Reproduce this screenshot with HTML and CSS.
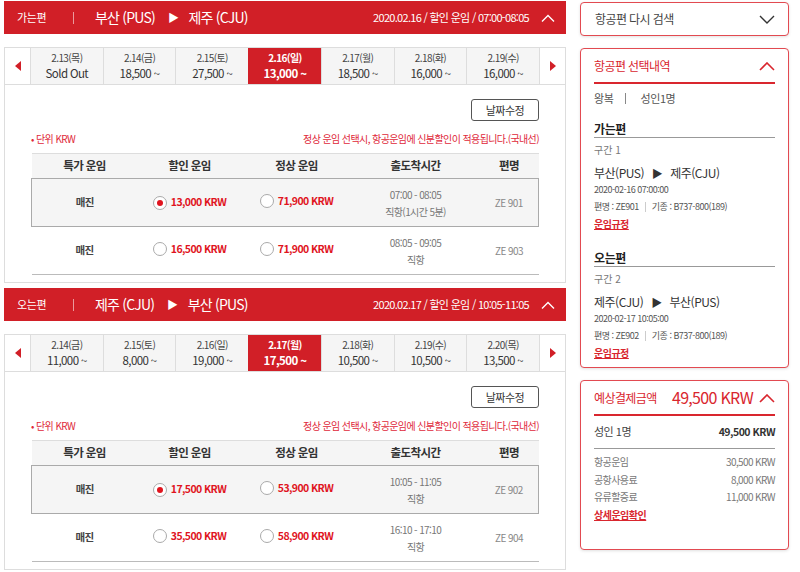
FILE: index.html
```html
<!DOCTYPE html>
<html lang="ko">
<head>
<meta charset="utf-8">
<title>항공편 선택</title>
<link rel="stylesheet" href="styles.css">
</head>
<body>
<div class="page">
  <div class="main">
    <section class="sec">
      <div class="sec-head">
        <span class="dir">가는편</span>
        <span class="vsep"></span>
        <span class="route">부산 (PUS)</span>
        <span class="arrow">▶</span>
        <span class="route">제주 (CJU)</span>
        <span class="info">2020.02.16 / 할인 운임 / 07:00-08:05</span>
        <svg class="chev" width="14" height="8" viewBox="0 0 14 8"><path d="M1 7.5 L7 1.5 L13 7.5" fill="none" stroke="#fff" stroke-width="1.4"/></svg>
      </div>
      <div class="sec-body">
        <div class="dates">
          <div class="nav"><svg width="6" height="10" viewBox="0 0 6 10"><path d="M6 0 L0 5 L6 10Z" fill="#d11f27"/></svg></div>
          <div class="tab"><span class="d">2.13(목)</span><span class="p">Sold Out</span></div>
          <div class="tab"><span class="d">2.14(금)</span><span class="p">18,500 ~</span></div>
          <div class="tab"><span class="d">2.15(토)</span><span class="p">27,500 ~</span></div>
          <div class="tab on"><span class="d">2.16(일)</span><span class="p">13,000 ~</span></div>
          <div class="tab"><span class="d">2.17(월)</span><span class="p">18,500 ~</span></div>
          <div class="tab"><span class="d">2.18(화)</span><span class="p">16,000 ~</span></div>
          <div class="tab"><span class="d">2.19(수)</span><span class="p">16,000 ~</span></div>
          <div class="nav"><svg width="6" height="10" viewBox="0 0 6 10"><path d="M0 0 L6 5 L0 10Z" fill="#d11f27"/></svg></div>
        </div>
        <div class="inner">
          <div class="btn-row"><button class="btn">날짜수정</button></div>
          <div class="notice"><span>• 단위 KRW</span><span>정상 운임 선택시, 항공운임에 신분할인이 적용됩니다.(국내선)</span></div>
          <table class="fares">
            <thead>
              <tr><th>특가 운임</th><th>할인 운임</th><th>정상 운임</th><th>출도착시간</th><th>편명</th></tr>
            </thead>
            <tbody>
              <tr class="sel">
                <td class="sold">매진</td>
                <td><span class="fare"><span class="radio on"></span>13,000 KRW</span></td>
                <td><span class="fare"><span class="radio"></span>71,900 KRW</span></td>
                <td class="time">07:00 - 08:05<br>직항(1시간 5분)</td>
                <td class="fno">ZE 901</td>
              </tr>
              <tr>
                <td class="sold">매진</td>
                <td><span class="fare"><span class="radio"></span>16,500 KRW</span></td>
                <td><span class="fare"><span class="radio"></span>71,900 KRW</span></td>
                <td class="time">08:05 - 09:05<br>직항</td>
                <td class="fno">ZE 903</td>
              </tr>
            </tbody>
          </table>
        </div>
      </div>
    </section>

    <section class="sec sec2">
      <div class="sec-head">
        <span class="dir">오는편</span>
        <span class="vsep"></span>
        <span class="route">제주 (CJU)</span>
        <span class="arrow">▶</span>
        <span class="route">부산 (PUS)</span>
        <span class="info">2020.02.17 / 할인 운임 / 10:05-11:05</span>
        <svg class="chev" width="14" height="8" viewBox="0 0 14 8"><path d="M1 7.5 L7 1.5 L13 7.5" fill="none" stroke="#fff" stroke-width="1.4"/></svg>
      </div>
      <div class="sec-body">
        <div class="dates">
          <div class="nav"><svg width="6" height="10" viewBox="0 0 6 10"><path d="M6 0 L0 5 L6 10Z" fill="#d11f27"/></svg></div>
          <div class="tab"><span class="d">2.14(금)</span><span class="p">11,000 ~</span></div>
          <div class="tab"><span class="d">2.15(토)</span><span class="p">8,000 ~</span></div>
          <div class="tab"><span class="d">2.16(일)</span><span class="p">19,000 ~</span></div>
          <div class="tab on"><span class="d">2.17(월)</span><span class="p">17,500 ~</span></div>
          <div class="tab"><span class="d">2.18(화)</span><span class="p">10,500 ~</span></div>
          <div class="tab"><span class="d">2.19(수)</span><span class="p">10,500 ~</span></div>
          <div class="tab"><span class="d">2.20(목)</span><span class="p">13,500 ~</span></div>
          <div class="nav"><svg width="6" height="10" viewBox="0 0 6 10"><path d="M0 0 L6 5 L0 10Z" fill="#d11f27"/></svg></div>
        </div>
        <div class="inner">
          <div class="btn-row"><button class="btn">날짜수정</button></div>
          <div class="notice"><span>• 단위 KRW</span><span>정상 운임 선택시, 항공운임에 신분할인이 적용됩니다.(국내선)</span></div>
          <table class="fares">
            <thead>
              <tr><th>특가 운임</th><th>할인 운임</th><th>정상 운임</th><th>출도착시간</th><th>편명</th></tr>
            </thead>
            <tbody>
              <tr class="sel">
                <td class="sold">매진</td>
                <td><span class="fare"><span class="radio on"></span>17,500 KRW</span></td>
                <td><span class="fare"><span class="radio"></span>53,900 KRW</span></td>
                <td class="time">10:05 - 11:05<br>직항</td>
                <td class="fno">ZE 902</td>
              </tr>
              <tr>
                <td class="sold">매진</td>
                <td><span class="fare"><span class="radio"></span>35,500 KRW</span></td>
                <td><span class="fare"><span class="radio"></span>58,900 KRW</span></td>
                <td class="time">16:10 - 17:10<br>직항</td>
                <td class="fno">ZE 904</td>
              </tr>
            </tbody>
          </table>
        </div>
      </div>
    </section>
  </div>

  <aside class="side">
    <div class="box search">
      <span>항공편 다시 검색</span>
      <svg width="16" height="9" viewBox="0 0 16 9"><path d="M1 1 L8 8 L15 1" fill="none" stroke="#333" stroke-width="1.4"/></svg>
    </div>

    <div class="box summary">
      <div class="box-head">
        <span class="title">항공편 선택내역</span>
        <svg width="16" height="9" viewBox="0 0 16 9"><path d="M1 8 L8 1 L15 8" fill="none" stroke="#d9262e" stroke-width="1.6"/></svg>
      </div>
      <div class="trip">왕복<span class="bar"></span>성인1명</div>
      <div class="leg">
        <div class="leg-title">가는편</div>
        <div class="seg">구간 1</div>
        <div class="leg-route">부산(PUS) <span class="tri">▶</span> 제주(CJU)</div>
        <div class="meta">2020-02-16 07:00:00</div>
        <div class="meta">편명 : ZE901<span class="mbar"></span>기종 : B737-800(189)</div>
        <a class="rule">운임규정</a>
      </div>
      <div class="leg">
        <div class="leg-title">오는편</div>
        <div class="seg">구간 2</div>
        <div class="leg-route">제주(CJU) <span class="tri">▶</span> 부산(PUS)</div>
        <div class="meta">2020-02-17 10:05:00</div>
        <div class="meta">편명 : ZE902<span class="mbar"></span>기종 : B737-800(189)</div>
        <a class="rule">운임규정</a>
      </div>
    </div>

    <div class="box price">
      <div class="box-head">
        <span class="title">예상결제금액</span>
        <span class="total">49,500 KRW
          <svg width="16" height="9" viewBox="0 0 16 9"><path d="M1 8 L8 1 L15 8" fill="none" stroke="#d9262e" stroke-width="1.6"/></svg>
        </span>
      </div>
      <div class="pax"><span>성인 1명</span><span class="amt">49,500 KRW</span></div>
      <div class="lines">
        <div class="line"><span>항공운임</span><span>30,500 KRW</span></div>
        <div class="line"><span>공항사용료</span><span>8,000 KRW</span></div>
        <div class="line"><span>유류할증료</span><span>11,000 KRW</span></div>
        <a class="rule">상세운임확인</a>
      </div>
    </div>
  </aside>
</div>
</body>
</html>
```

FILE: styles.css
```css
* { box-sizing: border-box; margin: 0; padding: 0; }
body {
  font-family: "Noto Sans CJK KR", "Noto Sans", sans-serif;
  color: #333;
  background: #fff;
  width: 800px;
  height: 572px;
  overflow: hidden;
  line-height: 1.2;
}
.page {
  display: flex;
  align-items: flex-start;
  gap: 14px;
  padding: 1px 0 0 4px;
}
.main { width: 562px; }

/* section header */
.sec-head {
  height: 33px;
  background: #d11f27;
  color: #fff;
  display: flex;
  align-items: center;
  padding: 0 10px 0 13px;
  letter-spacing: -0.4px;
}
.dir { font-size: 11px; width: 56px; }
.vsep { width: 1px; height: 12px; background: rgba(255,255,255,0.55); margin-right: 21px; }
.route { font-size: 14px; letter-spacing: -0.8px; }
.arrow { font-size: 11px; margin: 0 10px 0 13px; }
.info { margin-left: auto; font-size: 11px; letter-spacing: -0.7px; }
.chev { margin-left: 12px; margin-right: 1px; }

.sec-body {
  border: 1px solid #ddd;
  border-top: none;
}
.sec2 { margin-top: 5px; }

/* date tabs */
.dates {
  display: flex;
  height: 38px;
  margin-top: 13px;
  border-top: 1px solid #ddd;
  border-bottom: 1px solid #ddd;
}
.nav {
  width: 25px;
  display: flex;
  align-items: center;
  justify-content: center;
}
.tab {
  flex: 1;
  background: #f5f5f5;
  border-left: 1px solid #ddd;
  display: flex;
  flex-direction: column;
  align-items: center;
  justify-content: center;
  letter-spacing: -0.6px;
  color: #333;
}
.tab:nth-last-child(2) { border-right: 1px solid #ddd; }
.tab .d { font-size: 10px; line-height: 14px; color: #444; }
.tab .p { font-size: 11.5px; line-height: 17px; }
.tab.on { background: #d11f27; color: #fff; border-color: #d11f27; }
.tab.on .d { color: #fff; font-weight: 700; }
.tab.on .p { font-weight: 700; }

/* content */
.inner { padding: 14px 26px 7px 26px; }
.btn-row { display: flex; justify-content: flex-end; }
.btn {
  width: 68px;
  height: 22px;
  border: 1px solid #555;
  border-radius: 3px;
  background: #fff;
  font-family: inherit;
  font-size: 11px;
  letter-spacing: -0.5px;
  color: #333;
}
.notice {
  display: flex;
  justify-content: space-between;
  font-size: 10px;
  line-height: 14px;
  color: #e0283a;
  letter-spacing: -0.6px;
  margin-top: 11px;
}

.fares {
  width: 100%;
  border-collapse: collapse;
  margin-top: 7px;
  table-layout: fixed;
}
.fares th:nth-child(1) { width: 106px; }
.fares th:nth-child(2) { width: 104px; }
.fares th:nth-child(3) { width: 110px; }
.fares th:nth-child(4) { width: 128px; }
.fares thead tr { background: #f5f5f5; border-top: 1px solid #ddd; }
.fares th {
  height: 25px;
  font-size: 11.5px;
  font-weight: 700;
  color: #333;
  letter-spacing: -0.6px;
}
.fares td {
  text-align: center;
  height: 48px;
  font-size: 10.5px;
  letter-spacing: -0.6px;
}
.fares tr.sel { background: #f5f5f5; border: 1px solid #aaa; }
.fares tbody tr:last-child { border-bottom: 1px solid #bbb; }
.sold { color: #444; font-weight: 700; }
.fare {
  display: inline-flex;
  align-items: center;
  gap: 4px;
  color: #e0141e;
  font-weight: 700;
}
.radio {
  width: 14px;
  height: 14px;
  border: 1px solid #aaa;
  border-radius: 50%;
  background: #fff;
  display: inline-flex;
  align-items: center;
  justify-content: center;
}
.radio.on::after {
  content: "";
  width: 6px;
  height: 6px;
  border-radius: 50%;
  background: #e0141e;
}
.fares td.time { color: #777; font-size: 10px; line-height: 17px; }
.fares td.fno { color: #888; font-size: 10px; }

/* side */
.side {
  width: 209px;
  margin-top: 1px;
  display: flex;
  flex-direction: column;
  gap: 12px;
}
.box {
  border: 1px solid #e24a51;
  border-radius: 4px;
  background: #fff;
  box-shadow: 0 1px 3px rgba(0,0,0,0.12);
}
.search {
  height: 34px;
  display: flex;
  align-items: center;
  justify-content: space-between;
  padding: 0 13px 0 14px;
  font-size: 12px;
  color: #444;
  letter-spacing: -0.6px;
}
.summary { padding: 0 13px 6px; }
.box-head {
  height: 35px;
  display: flex;
  align-items: center;
  justify-content: space-between;
  border-bottom: 2px solid #d9262e;
  padding-top: 1px;
}
.box-head .title { font-size: 12px; color: #d9262e; letter-spacing: -0.6px; }
.trip {
  font-size: 11px;
  color: #555;
  margin-top: 6px;
  line-height: 16px;
  display: flex;
  align-items: center;
  letter-spacing: -0.4px;
}
.bar { width: 1px; height: 11px; background: #888; margin: 0 14px 0 12px; }
.leg { margin-top: 15px; }
.leg + .leg { margin-top: 18px; }
.leg-title {
  font-size: 12px;
  font-weight: 700;
  color: #222;
  border-bottom: 1px solid #999;
  line-height: 16px;
  letter-spacing: -0.4px;
}
.seg { font-size: 10px; color: #777; margin-top: 5px; line-height: 14px; }
.leg-route { font-size: 12px; color: #333; margin-top: 8px; line-height: 16px; letter-spacing: -0.5px; }
.tri { font-size: 11px; margin: 0 5px; color: #333; }
.meta { font-size: 9px; color: #555; line-height: 17px; letter-spacing: -0.5px; display: flex; align-items: center; }
.mbar { width: 1px; height: 10px; background: #ccc; margin: 0 6px; }
.rule {
  display: block;
  width: fit-content;
  font-size: 10px;
  font-weight: 700;
  color: #d9262e;
  text-decoration: underline;
  line-height: 17px;
  letter-spacing: -0.5px;
}
.price { padding: 0 13px 26px; }
.total {
  display: flex;
  align-items: center;
  gap: 6px;
  color: #d9262e;
  font-size: 16px;
  letter-spacing: -0.7px;
}
.pax {
  display: flex;
  justify-content: space-between;
  align-items: center;
  height: 33px;
  border-bottom: 1px solid #999;
  font-size: 11px;
  color: #444;
  letter-spacing: -0.5px;
}
.pax .amt { font-weight: 700; color: #333; font-size: 10.5px; }
.lines { padding-top: 4px; }
.line {
  display: flex;
  justify-content: space-between;
  font-size: 10px;
  color: #777;
  line-height: 17.5px;
  letter-spacing: -0.6px;
}
```
